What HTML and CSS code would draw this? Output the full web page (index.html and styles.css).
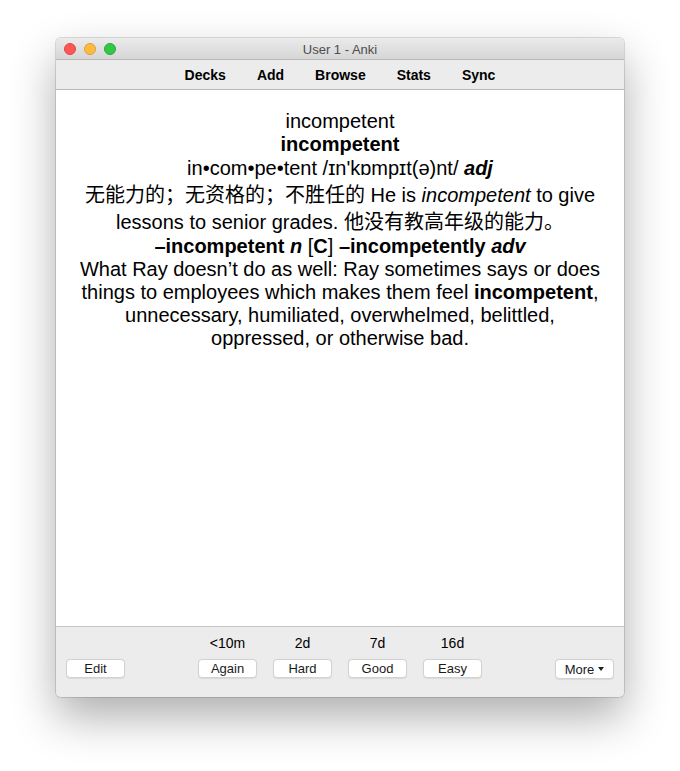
FILE: index.html
```html
<!DOCTYPE html>
<html>
<head>
<meta charset="utf-8">
<link rel="stylesheet" href="styles.css">
</head>
<body>
<div class="window">
  <div class="titlebar">
    <div class="lights">
      <span class="light red"></span>
      <span class="light yellow"></span>
      <span class="light green"></span>
    </div>
    <div class="title">User 1 - Anki</div>
  </div>
  <div class="toolbar">
    <span>Decks</span>
    <span>Add</span>
    <span>Browse</span>
    <span>Stats</span>
    <span>Sync</span>
  </div>
  <div class="card">
    <div>incompetent</div>
    <div><b>incompetent</b></div>
    <div class="pron">in•com•pe•tent /ɪn'kɒmpɪt(ə)nt/ <b><i>adj</i></b></div>
    <div><span class="zh">无能力的；无资格的；不胜任的</span> He is <i>incompetent</i> to give lessons to senior grades. <span class="zh">他没有教高年级的能力。</span></div>
    <div class="deriv"><b>–incompetent <i>n</i></b> [<b>C</b>] <b>–incompetently <i>adv</i></b></div>
    <div>What Ray doesn’t do as well: Ray sometimes says or does things to employees which makes them feel <b>incompetent</b>, unnecessary, humiliated, overwhelmed, belittled, oppressed, or otherwise bad.</div>
  </div>
  <div class="bottombar">
    <div class="side left"><button class="btn">Edit</button></div>
    <div class="answers">
      <div class="answer"><span class="due">&lt;10m</span><button class="btn">Again</button></div>
      <div class="answer"><span class="due">2d</span><button class="btn">Hard</button></div>
      <div class="answer"><span class="due">7d</span><button class="btn">Good</button></div>
      <div class="answer"><span class="due">16d</span><button class="btn">Easy</button></div>
    </div>
    <div class="side right"><button class="btn">More <span class="caret"></span></button></div>
  </div>
</div>
</body>
</html>
```
FILE: styles.css
```css
html, body {
  margin: 0;
  padding: 0;
  background: #ffffff;
  height: 100%;
}
body {
  padding: 38px 0 0 56px;
  box-sizing: border-box;
  font-family: "Liberation Sans", Arial, sans-serif;
}
.window {
  width: 568px;
  height: 659px;
  border-radius: 5px;
  overflow: hidden;
  display: flex;
  flex-direction: column;
  box-shadow: 0 20px 45px rgba(0,0,0,0.32), 0 0 0 1px rgba(0,0,0,0.13);
  background: #ececec;
}
.titlebar {
  height: 21px;
  flex: none;
  position: relative;
  background: linear-gradient(#ebebeb, #d6d6d6);
  border-bottom: 1px solid #b8b8b8;
  display: flex;
  align-items: center;
  justify-content: center;
}
.lights {
  position: absolute;
  left: 8px;
  top: 5px;
  display: flex;
  gap: 8px;
}
.light {
  width: 12px;
  height: 12px;
  border-radius: 50%;
  box-sizing: border-box;
}
.red { background: #fc5753; border: 0.5px solid #df4744; }
.yellow { background: #fdbc40; border: 0.5px solid #de9f34; }
.green { background: #33c748; border: 0.5px solid #27aa35; }
.title {
  font-size: 13px;
  color: #4d4d4d;
  margin-left: 0;
  margin-top: 1px;
}
.toolbar {
  flex: none;
  height: 30px;
  box-sizing: border-box;
  background: #ececec;
  border-bottom: 1px solid #b9b9b9;
  display: flex;
  align-items: center;
  justify-content: center;
  gap: 31px;
  font-size: 14px;
  font-weight: bold;
  color: #000;
}
.card {
  flex: 1;
  background: #ffffff;
  padding: 20px 20px;
  font-size: 20px;
  text-align: center;
  color: #000;
  border-bottom: 1px solid #c6c6c6;
}
.pron {
  padding-top: 1px;
}
.zh {
  font-family: "Noto Sans CJK SC", sans-serif;
  line-height: 27px;
}
.deriv {
  padding-top: 1px;
}
.bottombar {
  height: 70px;
  flex: none;
  background: #ececec;
  display: flex;
  align-items: flex-start;
  padding: 0 10px;
  box-sizing: border-box;
}
.side {
  width: 60px;
  padding-top: 32px;
  display: flex;
}
.side.right { justify-content: flex-end; }
.answers {
  flex: 1;
  display: flex;
  justify-content: center;
  gap: 16px;
  padding-top: 8px;
}
.answer {
  display: flex;
  flex-direction: column;
  align-items: center;
  gap: 7px;
}
.due {
  font-size: 14px;
  line-height: 17px;
  color: #000;
}
.btn {
  width: 59px;
  height: 19px;
  padding: 0;
  margin: 0;
  font-family: "Liberation Sans", Arial, sans-serif;
  font-size: 13px;
  color: #1a1a1a;
  background: #ffffff;
  border: 1px solid #d2d2d2;
  border-radius: 4px;
  box-shadow: 0 0.5px 1px rgba(0,0,0,0.08);
  display: flex;
  align-items: center;
  justify-content: center;
}
.right .btn { height: 20px; }
.caret {
  display: inline-block;
  width: 0;
  height: 0;
  margin-left: 4px;
  border-left: 3.5px solid transparent;
  border-right: 3.5px solid transparent;
  border-top: 4px solid #222;
}
```
